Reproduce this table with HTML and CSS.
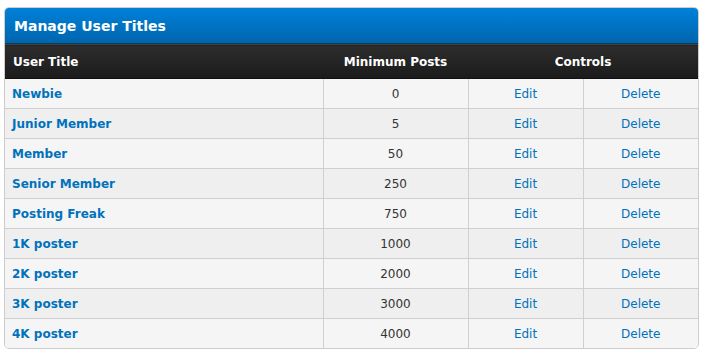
FILE: index.html
```html
<!DOCTYPE html>
<html>
<head>
<meta charset="utf-8">
<link rel="stylesheet" href="styles.css">
</head>
<body>
<div class="box">
  <div class="title">Manage User Titles</div>
  <table class="grid">
    <thead>
      <tr>
        <th class="c-title">User Title</th>
        <th class="c-posts">Minimum Posts</th>
        <th class="c-ctrl" colspan="2">Controls</th>
      </tr>
    </thead>
    <tbody>
      <tr class="odd"><td class="name"><a href="#">Newbie</a></td><td class="num">0</td><td class="act"><a href="#">Edit</a></td><td class="act"><a href="#">Delete</a></td></tr>
      <tr class="even"><td class="name"><a href="#">Junior Member</a></td><td class="num">5</td><td class="act"><a href="#">Edit</a></td><td class="act"><a href="#">Delete</a></td></tr>
      <tr class="odd"><td class="name"><a href="#">Member</a></td><td class="num">50</td><td class="act"><a href="#">Edit</a></td><td class="act"><a href="#">Delete</a></td></tr>
      <tr class="even"><td class="name"><a href="#">Senior Member</a></td><td class="num">250</td><td class="act"><a href="#">Edit</a></td><td class="act"><a href="#">Delete</a></td></tr>
      <tr class="odd"><td class="name"><a href="#">Posting Freak</a></td><td class="num">750</td><td class="act"><a href="#">Edit</a></td><td class="act"><a href="#">Delete</a></td></tr>
      <tr class="even"><td class="name"><a href="#">1K poster</a></td><td class="num">1000</td><td class="act"><a href="#">Edit</a></td><td class="act"><a href="#">Delete</a></td></tr>
      <tr class="odd"><td class="name"><a href="#">2K poster</a></td><td class="num">2000</td><td class="act"><a href="#">Edit</a></td><td class="act"><a href="#">Delete</a></td></tr>
      <tr class="even"><td class="name"><a href="#">3K poster</a></td><td class="num">3000</td><td class="act"><a href="#">Edit</a></td><td class="act"><a href="#">Delete</a></td></tr>
      <tr class="odd last"><td class="name"><a href="#">4K poster</a></td><td class="num">4000</td><td class="act"><a href="#">Edit</a></td><td class="act"><a href="#">Delete</a></td></tr>
    </tbody>
  </table>
</div>
</body>
</html>
```

FILE: styles.css
```css
html, body {
  margin: 0;
  padding: 0;
  background: #fff;
  font-family: "DejaVu Sans", Verdana, sans-serif;
}

.box {
  margin: 7px 9px 0 4px;
  border: 1px solid #ccc;
  border-radius: 5px;
  overflow: hidden;
  background: #fff;
}

.title {
  height: 36px;
  box-sizing: border-box;
  padding: 0 9px;
  line-height: 36px;
  color: #fff;
  font-weight: bold;
  font-size: 14px;
  background: linear-gradient(#0081d9, #0065ae);
  border-bottom: 1px solid #0b3b5c;
}

.grid {
  width: 100%;
  border-collapse: collapse;
  table-layout: fixed;
}

.grid th {
  height: 33px;
  padding: 0;
  color: #fff;
  font-weight: bold;
  font-size: 12px;
  background: linear-gradient(#2d2d2d, #1b1b1b);
  border-top: 1px solid #444;
  border-bottom: 1px solid #111;
}

.grid th.c-title { text-align: left; padding-left: 8px; width: 310px; }
.grid th.c-posts { width: 145px; }

.grid td {
  height: 29px;
  padding: 0;
  font-size: 12px;
  border-top: 1px solid #cfcfcf;
  border-left: 1px solid #cfcfcf;
  text-align: center;
  color: #333;
}

.grid tr td:first-child { border-left: 0; }
.grid tbody tr:first-child td { border-top: 0; }

.grid tr.odd td { background: #f5f5f5; }
.grid tr.even td { background: #efefef; }

.grid td.name {
  text-align: left;
  padding-left: 7px;
  font-weight: bold;
}

.grid a {
  color: #0072bc;
  text-decoration: none;
}
```
